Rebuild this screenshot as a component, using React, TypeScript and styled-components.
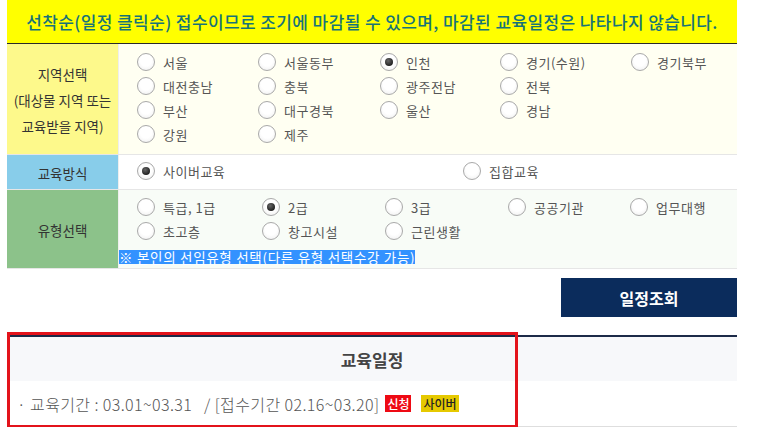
import styled, { createGlobalStyle } from "styled-components";

const GlobalStyle = createGlobalStyle`
  body {
    margin: 0;
    background: #fff;
    font-family: "Noto Sans CJK KR", "Noto Sans", sans-serif;
  }
`;

const Page = styled.div`
  width: 730px;
  margin-left: 7px;
`;

const Notice = styled.div`
  height: 43px;
  display: flex;
  align-items: center;
  justify-content: center;
  background: #ffff00;
  border-bottom: 1px solid #2a2a2a;
  color: #177378;
  font-size: 17px;
  font-weight: 500;
  letter-spacing: 0.4px;
  white-space: nowrap;
`;

const Row = styled.div`
  display: grid;
  grid-template-columns: 111px 1fr;
  border-bottom: 1px solid #e6e6e6;
`;

const Label = styled.div<{ $bg: string }>`
  background: ${({ $bg }) => $bg};
  display: flex;
  flex-direction: column;
  align-items: center;
  justify-content: center;
  color: #333;
  font-size: 13.5px;
  line-height: 26px;
  white-space: nowrap;
  padding-top: 2px;
`;

const Cell = styled.div<{ $bg: string; $pad?: string }>`
  background: ${({ $bg }) => $bg};
  border-left: 1px solid #eeeeee;
  padding: ${({ $pad }) => $pad ?? "6px 0 8px"};
`;

const Options = styled.div<{ $cols: string }>`
  display: grid;
  grid-template-columns: ${({ $cols }) => $cols};
  padding-left: 18px;
`;

const Option = styled.label`
  display: flex;
  align-items: center;
  gap: 8px;
  height: 24px;
  color: #555;
  font-size: 13px;
  letter-spacing: 0.5px;
  white-space: nowrap;
`;

const Radio = styled.span<{ $checked?: boolean }>`
  position: relative;
  width: 16px;
  height: 16px;
  border-radius: 50%;
  border: 1px solid #a9a9a9;
  background: radial-gradient(circle at 50% 40%, #ffffff 45%, #ececec 100%);
  flex: none;

  &::after {
    content: "";
    display: ${({ $checked }) => ($checked ? "block" : "none")};
    position: absolute;
    left: 4px;
    top: 4px;
    width: 8px;
    height: 8px;
    border-radius: 50%;
    background: radial-gradient(circle at 40% 35%, #666 0%, #222 70%);
  }
`;

const Note = styled.span`
  display: inline-block;
  margin-top: 7px;
  background: #3392ff;
  color: #fff;
  font-size: 13.5px;
  letter-spacing: 0.7px;
  line-height: 14px;
  white-space: nowrap;
`;

const ActionBar = styled.div`
  display: flex;
  justify-content: flex-end;
  margin-top: 9px;
`;

const SearchButton = styled.button`
  width: 176px;
  height: 39px;
  border: 0;
  background: #0b2c5c;
  color: #fff;
  font-family: inherit;
  font-size: 16px;
  font-weight: 700;
`;

const Schedule = styled.section`
  position: relative;
  margin-top: 18px;
  border-top: 2px solid #1c2a48;
`;

const ScheduleTitle = styled.div`
  height: 44px;
  display: flex;
  align-items: center;
  justify-content: center;
  background: #f7f8fa;
  color: #444;
  font-size: 17px;
  font-weight: 700;
`;

const ScheduleItem = styled.div`
  height: 45px;
  display: flex;
  align-items: center;
  padding-left: 10px;
  border-bottom: 1px solid #dedede;
  color: #555;
  font-size: 16px;
  letter-spacing: 0.4px;
  font-weight: 300;
  white-space: pre;
`;

const Badge = styled.span<{ $bg: string; $color: string; $gap?: number }>`
  display: inline-block;
  margin-left: ${({ $gap }) => $gap ?? 6}px;
  padding: 0 2px;
  background: ${({ $bg }) => $bg};
  color: ${({ $color }) => $color};
  font-size: 12px;
  letter-spacing: 0;
  font-weight: 500;
  line-height: 17px;
`;

const Highlight = styled.div`
  position: absolute;
  left: 0;
  top: -5px;
  width: 511px;
  height: 96px;
  box-sizing: border-box;
  border: 3px solid #e3131b;
  pointer-events: none;
`;

type Opt = { name: string; checked?: boolean };

const regions: Opt[] = [
  { name: "서울" },
  { name: "서울동부" },
  { name: "인천", checked: true },
  { name: "경기(수원)" },
  { name: "경기북부" },
  { name: "대전충남" },
  { name: "충북" },
  { name: "광주전남" },
  { name: "전북" },
  { name: "" },
  { name: "부산" },
  { name: "대구경북" },
  { name: "울산" },
  { name: "경남" },
  { name: "" },
  { name: "강원" },
  { name: "제주" },
];

const types: Opt[] = [
  { name: "특급, 1급" },
  { name: "2급", checked: true },
  { name: "3급" },
  { name: "공공기관" },
  { name: "업무대행" },
  { name: "초고층" },
  { name: "창고시설" },
  { name: "근린생활" },
];

const renderOptions = (list: Opt[]) =>
  list.map((o, i) =>
    o.name ? (
      <Option key={i}>
        <Radio $checked={o.checked} />
        {o.name}
      </Option>
    ) : (
      <span key={i} />
    )
  );

export default function App() {
  return (
    <>
      <GlobalStyle />
      <Page>
        <Notice>
          선착순(일정 클릭순) 접수이므로 조기에 마감될 수 있으며, 마감된 교육일정은 나타나지 않습니다.
        </Notice>

        <Row>
          <Label $bg="#fdf98b">
            <span>지역선택</span>
            <span>(대상물 지역 또는</span>
            <span>교육받을 지역)</span>
          </Label>
          <Cell $bg="#fffff2">
            <Options $cols="121px 122px 120px 131px 1fr">
              {renderOptions(regions)}
            </Options>
          </Cell>
        </Row>

        <Row>
          <Label $bg="#88cdea">교육방식</Label>
          <Cell $bg="#ffffff" $pad="4px 0 6px">
            <Options $cols="326px 1fr">
              {renderOptions([{ name: "사이버교육", checked: true }, { name: "집합교육" }])}
            </Options>
          </Cell>
        </Row>

        <Row>
          <Label $bg="#8cc28a">유형선택</Label>
          <Cell $bg="#f8fcf7" $pad="5px 0 0">
            <Options $cols="125px 123px 123px 122px 1fr">
              {renderOptions(types)}
            </Options>
            <Note>※ 본인의 선임유형 선택(다른 유형 선택수강 가능)</Note>
          </Cell>
        </Row>

        <ActionBar>
          <SearchButton type="button">일정조회</SearchButton>
        </ActionBar>

        <Schedule>
          <ScheduleTitle>교육일정</ScheduleTitle>
          <ScheduleItem>
            · 교육기간 : 03.01~03.31   / [접수기간 02.16~03.20]
            <Badge $bg="#ee0a14" $color="#fff">신청</Badge>
            <Badge $bg="#e6c900" $color="#222" $gap={10}>사이버</Badge>
          </ScheduleItem>
          <Highlight />
        </Schedule>
      </Page>
    </>
  );
}
